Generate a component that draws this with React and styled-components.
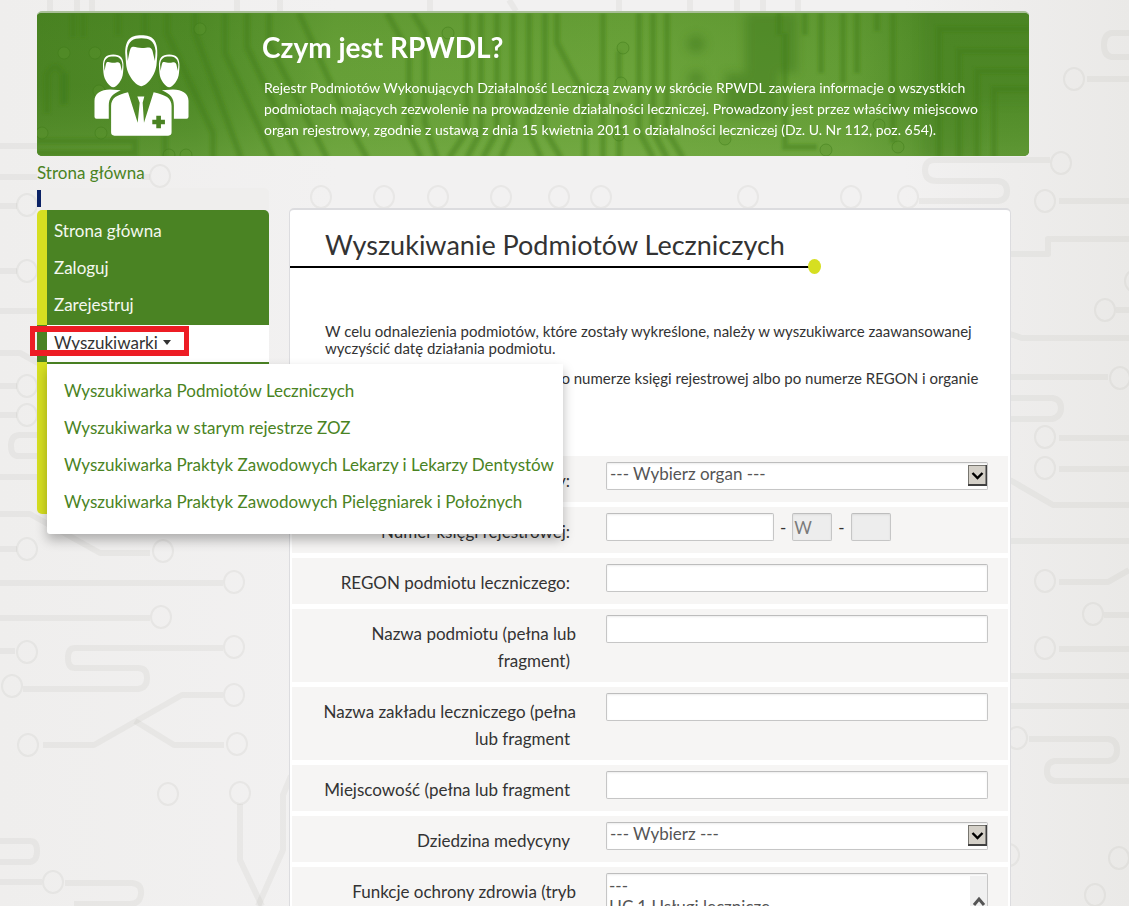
import React from "react";
import styled, { createGlobalStyle } from "styled-components";

const green = "#4a8323";
const lime = "#d6df21";
const ink = "#333333";

const GlobalStyle = createGlobalStyle`
  *, *::before, *::after { box-sizing: border-box; }
  body {
    margin: 0;
    background: #f1f0ef;
    color: ${ink};
    font-family: Lato, Roboto, "Liberation Sans", sans-serif;
    font-size: 17px;
  }
  h1, h2, p, ul { margin: 0; padding: 0; }
  ul { list-style: none; }
  a { text-decoration: none; }
`;

const Page = styled.div`
  position: relative;
  height: 100vh;
  overflow: hidden;
  padding: 11px 100px 0 37px;
  background: linear-gradient(90deg, #efeeed 0, #f2f1f1 30%, #f2f1f1 80%, #eae9e7 100%);
`;

const Backdrop = styled.svg`
  position: absolute;
  top: 0;
  left: 0;
  width: 1129px;
  height: 906px;
`;

const Content = styled.div`
  position: relative;
`;

const Banner = styled.header`
  position: relative;
  display: flex;
  height: 145px;
  border-top: 2px solid #a9bf98;
  border-radius: 5px;
  overflow: hidden;
  background: ${green};
  color: #ffffff;
`;

const Circuit = styled.svg`
  position: absolute;
  inset: 0;
  width: 100%;
  height: 100%;
`;

const People = styled.svg`
  position: relative;
  flex: none;
  width: 95px;
  height: 101px;
  margin: 22px 73px 0 57px;
`;

const BannerText = styled.div`
  position: relative;
`;

const BannerTitle = styled.h2`
  margin-top: 16px;
  font-size: 28px;
  line-height: 36px;
  font-weight: 700;
`;

const BannerCopy = styled.p`
  margin-top: 12px;
  padding-left: 2px;
  font-size: 14px;
  line-height: 21px;
  font-weight: 400;
  white-space: nowrap;
`;

const Breadcrumb = styled.nav`
  display: flex;
  height: 32px;
  align-items: center;
  a { color: ${green}; }
`;

const Columns = styled.div`
  display: flex;
  align-items: flex-start;
  gap: 20px;
  padding-right: 18px;
`;

const SideColumn = styled.aside`
  flex: none;
  width: 232px;
  padding-top: 2px;
  border-radius: 5px;
  background: #efeeed;
`;

const Marker = styled.div`
  width: 4px;
  height: 17px;
  margin-bottom: 3px;
  background: #0b2265;
`;

const SideMenu = styled.nav`
  position: relative;
  min-height: 304px;
  border-radius: 5px;
  background: linear-gradient(90deg, ${lime} 10px, ${green} 10px);
`;

const MenuList = styled.ul`
  padding-top: 2px;
`;

const MenuLink = styled.a`
  display: flex;
  align-items: center;
  height: 37px;
  margin-left: 10px;
  padding-left: 7px;
  color: #f4f8ef;
`;

const ActiveItem = styled.li`
  position: relative;
  margin-top: 2px;
`;

const ActiveButton = styled.button`
  display: flex;
  align-items: center;
  gap: 5px;
  width: 100%;
  height: 39px;
  padding: 0 0 4px 17px;
  border: 0;
  background: linear-gradient(${green}, ${green}) 10px 37px / 100% 2px no-repeat,
    linear-gradient(90deg, transparent 10px, #ffffff 10px),
    linear-gradient(${green} 37px, ${lime} 37px);
  color: ${ink};
  font: inherit;
  text-align: left;
`;

const Caret = styled.span`
  border: 4px solid transparent;
  border-top: 5px solid ${ink};
  border-bottom: 0;
`;

const Highlight = styled.div`
  position: absolute;
  z-index: 3;
  top: 1px;
  left: -7px;
  width: 159px;
  height: 30px;
  border: solid #ed1c24;
  border-width: 6px 5px;
  pointer-events: none;
`;

const SubMenu = styled.ul`
  position: absolute;
  z-index: 2;
  top: 39px;
  left: 10px;
  width: 516px;
  && { padding: 8px 0 14px; }
  border-radius: 0 0 3px 3px;
  background: #ffffff;
  box-shadow: 0 6px 12px rgba(0, 0, 0, 0.28);
  a {
    display: flex;
    align-items: center;
    height: 37px;
    padding-left: 17px;
    color: ${green};
    white-space: nowrap;
  }
`;

const Panel = styled.main`
  flex: 1;
  min-width: 0;
  margin-top: 20px;
  border: 1px solid #dcdcdf;
  border-top-width: 2px;
  border-radius: 5px;
  background: #ffffff;
`;

const PanelTitle = styled.h1`
  position: relative;
  height: 57px;
  padding: 16px 0 0 35px;
  font-size: 27px;
  line-height: 38px;
  font-weight: 400;
`;

const TitleRule = styled.svg`
  position: absolute;
  left: 0;
  bottom: -7px;
  width: 531px;
  height: 15px;
`;

const Intro = styled.div`
  height: 189px;
  padding: 56px 35px 0;
  font-size: 15px;
  line-height: 17px;
  p + p { margin-top: 13px; }
`;

const IndentedLine = styled.p`
  text-indent: 228px;
  white-space: nowrap;
`;

const Form = styled.form`
  display: flex;
  flex-direction: column;
  gap: 5px;
  padding: 0 2px;
`;

const Row = styled.div`
  display: flex;
  align-items: flex-start;
  gap: 30px;
  min-height: 46px;
  padding-right: 20px;
  background: #f6f5f4;
`;

const Label = styled.label`
  flex: none;
  width: 284px;
  padding: 11px 0 8px 20px;
  line-height: 27px;
  text-align: right;
  span { padding-right: ${(p) => (p.$open ? 0 : 6)}px; }
`;

const Field = styled.div`
  position: relative;
  flex: 1;
  display: flex;
  align-items: center;
  gap: 6px;
  padding-top: 6px;
`;

const boxed = `
  height: 28px;
  border: 1px solid #c6c6c6;
  border-top-color: #bdbdbd;
  border-radius: 2px;
  background: #ffffff;
  box-shadow: inset 0 1px 2px rgba(0, 0, 0, 0.08);
  color: #555555;
  font: inherit;
`;

const TextInput = styled.input`
  ${boxed}
  width: ${(p) => p.$width || "100%"};
  padding: 0 1px;
  &:disabled { background: #ededed; color: #7a7a7a; }
`;

const Select = styled.select`
  ${boxed}
  width: 100%;
  appearance: none;
  padding: 0 20px 6px 3px;
`;

const ListBox = styled.select`
  ${boxed}
  width: 100%;
  height: 120px;
  appearance: none;
  padding: 1px 0;
  overflow: hidden;
  option { min-height: 0; padding: 0 2px; line-height: 21px; }
`;

const DropButton = styled.svg`
  position: absolute;
  top: 9px;
  right: 1px;
  width: 19px;
  height: 21px;
  pointer-events: none;
`;

const ScrollTrack = styled.svg`
  position: absolute;
  top: 9px;
  right: 1px;
  width: 17px;
  height: 110px;
  pointer-events: none;
`;

const pads = [
  [27, 205], [27, 271], [27, 386], [27, 415], [160, 176], [27, 549], [163, 551],
  [234, 582], [161, 617], [27, 652], [234, 647], [12, 686], [234, 695], [28, 745],
  [237, 744], [168, 794], [240, 793], [53, 882],
  [321, 197], [384, 197], [438, 197], [501, 197], [559, 197], [601, 197], [748, 197],
  [851, 197], [908, 197], [1061, 163],
  [1074, 79], [1045, 201], [1105, 310], [1135, 281], [1120, 378], [1045, 437],
  [1045, 468], [1045, 581], [1093, 614], [1045, 648], [1017, 738], [1009, 855],
  [1119, 858], [1095, 895],
];

const traces = [
  "M0 146H37", "M0 177H37", "M142 177H150", "M0 206H17", "M0 271H17", "M0 311H37",
  "M0 353H20L40 364", "M0 386H17", "M0 415H17", "M37 435H20Q11 435 11 446T20 456H37",
  "M0 477H37", "M0 514H30L100 553H150", "M0 549H17", "M0 583H223", "M0 618H150", "M0 651H15",
  "M223 648H75Q68 648 68 658T75 668H138Q147 668 147 678T138 689H23",
  "M223 695H182L94 745H43", "M135 721L174 745H224",
  "M240 804V860L262 906", "M291 776L283 795V850L258 906",
  "M0 841H30Q37 841 37 851T30 862H0", "M0 882H42M65 883H132Q142 884 141 894T130 904H74",
  "M919 201H998Q1007 200 1007 191T998 181H937Q925 181 925 170T937 160H1050",
  "M1129 33H1112Q1104 34 1104 45T1112 57H1129", "M1087 79H1129", "M1059 201H1129",
  "M1010 254H1048V239H1129", "M1116 310H1129", "M1010 334L1022 338H1129", "M1010 377H1108",
  "M1010 398H1052Q1061 399 1061 408T1052 419H1010", "M1059 438H1129", "M1059 469H1129",
  "M1010 480L1053 505H1129", "M1010 541H1129", "M1059 582H1108L1129 570", "M1104 615H1129",
  "M1059 649H1129", "M1010 676H1129", "M1010 706H1129",
  "M1029 739H1108Q1117 740 1117 750T1108 761H1055Q1047 762 1047 771T1055 781H1129",
  "M50 0V11", "M77 0V11", "M92 0V11", "M237 0V11", "M280 0V11", "M430 0V11",
  "M509 0L516 11", "M619 0V11", "M690 0V11", "M737 0V11", "M763 0V11", "M798 0V11",
];

function CircuitBackdrop() {
  return (
    <Backdrop viewBox="0 0 1129 906" aria-hidden="true">
      <g fill="none" stroke="#5a5545" strokeOpacity="0.055" strokeWidth="6" strokeLinejoin="round">
        {traces.map((d) => <path key={d} d={d} />)}
      </g>
      <g fill="none" stroke="#5a5545" strokeOpacity="0.06" strokeWidth="2">
        {pads.map(([x, y]) => <ellipse key={`${x}-${y}`} cx={x} cy={y} rx="10" ry="11" />)}
      </g>
    </Backdrop>
  );
}

const bannerTraces = [
  "M36 0V24", "M46 0V24", "M81 0V22", "M28 60V90", "M10 100V62Q18 46 26 62V92",
  "M0 140H98V128H0", "M108 0V28L128 70V145", "M130 0V20L176 120V145", "M158 0V20L204 145",
  "M188 0V40L236 145", "M210 0V34L262 145", "M232 0V30L290 145", "M262 0L316 120L330 145",
  "M350 0L372 40V120L384 145", "M376 0L388 20V110L400 145", "M430 0V118L412 145", "M444 0V118L430 145",
  "M460 0V118L446 145", "M476 0V118L464 145", "M492 0V118L504 145", "M508 0V118L524 145",
  "M520 0V30L548 84V145", "M566 0V145", "M582 38V66", "M582 90V145",
  "M602 0V118L616 145", "M616 0V118L630 145", "M630 0V118L646 145",
  "M742 0V22", "M748 20V134H780", "M768 0V22", "M784 0V60", "M806 0V70", "M820 0V60", "M840 0V18", "M856 0V130",
  "M902 145V16H992", "M922 145V38H992", "M940 145V58H992", "M957 145V76H992",
];

const bannerPads = [
  [27, 40], [58, 40], [62, 78], [64, 120], [5, 120], [132, 142], [149, 142], [163, 16], [411, 20],
  [586, 35], [584, 70], [582, 122], [688, 126], [789, 137], [861, 134], [842, 112],
];

function BannerCircuit() {
  return (
    <Circuit viewBox="0 0 992 143" preserveAspectRatio="none" aria-hidden="true">
      <defs>
        <linearGradient id="sweep" x1="0" x2="1" y1="0" y2="0">
          <stop offset="0" stopColor="#498222" />
          <stop offset="0.16" stopColor="#4f8a27" />
          <stop offset="0.3" stopColor="#67a038" />
          <stop offset="0.6" stopColor="#6ca43b" />
          <stop offset="0.82" stopColor="#649d36" />
          <stop offset="0.9" stopColor="#508b28" />
          <stop offset="1" stopColor="#4f8a27" />
        </linearGradient>
        <linearGradient id="fall" x1="0" x2="0" y1="0" y2="1">
          <stop offset="0" stopColor="#447f1c" stopOpacity="0.2" />
          <stop offset="0.5" stopColor="#5c972f" stopOpacity="0.05" />
          <stop offset="1" stopColor="#83b653" stopOpacity="0.3" />
        </linearGradient>
        <filter id="soft"><feGaussianBlur stdDeviation="1.4" /></filter>
        <filter id="softer"><feGaussianBlur stdDeviation="5" /></filter>
      </defs>
      <rect width="992" height="143" fill="url(#sweep)" />
      <rect width="992" height="143" fill="url(#fall)" />
      <g fill="#478020" opacity="0.6" filter="url(#softer)">
        <path d="M708 0H760V60H742V104H688V60H708V40Z" />
        <circle cx="659" cy="31" r="9" />
        <circle cx="659" cy="66" r="8" />
        <path d="M885 -5H1000V90H940V145H885Z" opacity="0.5" />
      </g>
      <g fill="none" stroke="#417c19" strokeOpacity="0.45" strokeWidth="6" filter="url(#soft)">
        {bannerTraces.map((d) => <path key={d} d={d} />)}
      </g>
      <g fill="#5c952f" fillOpacity="0.35" stroke="#3f7a19" strokeOpacity="0.45" strokeWidth="1">
        {bannerPads.map(([x, y]) => <circle key={`${x}-${y}`} cx={x} cy={y} r="6" />)}
      </g>
    </Circuit>
  );
}

function Head({ transform }) {
  return (
    <g transform={transform}>
      <path fill="#fff" d="M286 165C284 120 300 105 334 105C368 105 384 120 382 165L380 190C378 225 350 258 334 258C318 258 290 225 288 190Z" />
      <path fill={green} d="M293 182L291 152C294 122 310 114 334 114C358 114 374 122 377 152L375 182L370 162C367 143 362 140 348 142C326 147 318 137 306 140C299 143 298 160 293 182Z" />
    </g>
  );
}

function PeopleIcon() {
  return (
    <People viewBox="192 104 285 304" aria-hidden="true">
      <Head transform="translate(35.7 95.8) scale(0.64)" />
      <Head transform="translate(204.2 95.8) scale(0.64)" />
      <Head />
      <g fill="#fff">
        <path d="M193 350V302C193 280 212 268 240 268L272 270C246 281 236 294 236 316V356H199Q193 356 193 350Z" />
        <path d="M476 350V302C476 280 457 268 429 268L396 270C422 281 432 294 432 316V356H470Q476 356 476 350Z" />
        <path d="M243 397V318C243 293 260 284 294 276L323 368L329 308L322 289H343L338 308L342 368L371 276C407 284 425 293 425 318V397Q425 407 415 407H253Q243 407 243 397Z" />
      </g>
      <path fill={green} d="M379 347h14v12h12v14h-12v12h-14v-12h-12v-14h12z" />
    </People>
  );
}

function Drop() {
  return (
    <DropButton viewBox="0 0 19 21" aria-hidden="true">
      <rect x="0.5" y="0.5" width="18" height="20" fill="#d4d0c8" stroke="#77756f" />
      <path d="M0 20H18.5V0" fill="none" stroke="#404040" strokeWidth="2" />
      <path d="M4.5 8L9.5 13L14.5 8" fill="none" stroke="#000" strokeWidth="2.4" />
    </DropButton>
  );
}

function FormRow({ id, label, open, children }) {
  return (
    <Row>
      <Label htmlFor={id} $open={open}><span>{label}</span></Label>
      <Field>{children}</Field>
    </Row>
  );
}

export default function App() {
  return (
    <Page>
      <GlobalStyle />
      <CircuitBackdrop />
      <Content>
        <Banner>
          <BannerCircuit />
          <PeopleIcon />
          <BannerText>
            <BannerTitle>Czym jest RPWDL?</BannerTitle>
            <BannerCopy>
              Rejestr Podmiotów Wykonujących Działalność Leczniczą zwany w skrócie RPWDL zawiera informacje o wszystkich<br />
              podmiotach mających zezwolenie na prowadzenie działalności leczniczej. Prowadzony jest przez właściwy miejscowo<br />
              organ rejestrowy, zgodnie z ustawą z dnia 15 kwietnia 2011 o działalności leczniczej (Dz. U. Nr 112, poz. 654).
            </BannerCopy>
          </BannerText>
        </Banner>

        <Breadcrumb><a href="#home">Strona główna</a></Breadcrumb>

        <Columns>
          <SideColumn>
            <Marker />
            <SideMenu>
              <MenuList>
                <li><MenuLink href="#home">Strona główna</MenuLink></li>
                <li><MenuLink href="#login">Zaloguj</MenuLink></li>
                <li><MenuLink href="#register">Zarejestruj</MenuLink></li>
                <ActiveItem>
                  <ActiveButton type="button" aria-expanded="true">
                    Wyszukiwarki
                    <Caret />
                  </ActiveButton>
                  <SubMenu>
                    <li><a href="#podmioty">Wyszukiwarka Podmiotów Leczniczych</a></li>
                    <li><a href="#zoz">Wyszukiwarka w starym rejestrze ZOZ</a></li>
                    <li><a href="#lekarze">Wyszukiwarka Praktyk Zawodowych Lekarzy i Lekarzy Dentystów</a></li>
                    <li><a href="#pielegniarki">Wyszukiwarka Praktyk Zawodowych Pielęgniarek i Położnych</a></li>
                  </SubMenu>
                  <Highlight />
                </ActiveItem>
              </MenuList>
            </SideMenu>
          </SideColumn>

          <Panel>
            <PanelTitle>
              Wyszukiwanie Podmiotów Leczniczych
              <TitleRule viewBox="0 0 531 15" aria-hidden="true">
                <path d="M0 8H520" stroke="#000" strokeWidth="2" />
                <ellipse cx="524.5" cy="7.5" rx="6.5" ry="7.5" fill={lime} />
              </TitleRule>
            </PanelTitle>
            <Intro>
              <p>
                W celu odnalezienia podmiotów, które zostały wykreślone, należy w wyszukiwarce zaawansowanej
                {" "}wyczyścić datę działania podmiotu.
              </p>
              <IndentedLine>po numerze księgi rejestrowej albo po numerze REGON i organie</IndentedLine>
            </Intro>
            <Form>
              <FormRow id="organ" label="Organ rejestrowy:">
                <Select id="organ"><option>--- Wybierz organ ---</option></Select>
                <Drop />
              </FormRow>
              <FormRow id="ksiega" label="Numer księgi rejestrowej:">
                <TextInput id="ksiega" $width="168px" />
                -
                <TextInput $width="40px" defaultValue="W" disabled aria-label="Typ księgi" />
                -
                <TextInput $width="40px" disabled aria-label="Numer dodatkowy" />
              </FormRow>
              <FormRow id="regon" label="REGON podmiotu leczniczego:"><TextInput id="regon" /></FormRow>
              <FormRow id="podmiot" label="Nazwa podmiotu (pełna lub fragment)"><TextInput id="podmiot" /></FormRow>
              <FormRow id="zaklad" label="Nazwa zakładu leczniczego (pełna lub fragment"><TextInput id="zaklad" /></FormRow>
              <FormRow id="miasto" label="Miejscowość (pełna lub fragment"><TextInput id="miasto" /></FormRow>
              <FormRow id="dziedzina" label="Dziedzina medycyny">
                <Select id="dziedzina"><option>--- Wybierz ---</option></Select>
                <Drop />
              </FormRow>
              <FormRow id="funkcje" label="Funkcje ochrony zdrowia (tryb" open>
                <ListBox id="funkcje" multiple>
                  <option>---</option>
                  <option>HC.1 Usługi lecznicze</option>
                </ListBox>
                <ScrollTrack viewBox="0 0 17 110" aria-hidden="true">
                  <rect width="17" height="110" fill="#f0f0f0" />
                  <path d="M4 29L9 23L14 29" fill="none" stroke="#555" strokeWidth="3" />
                </ScrollTrack>
              </FormRow>
            </Form>
          </Panel>
        </Columns>
      </Content>
    </Page>
  );
}
